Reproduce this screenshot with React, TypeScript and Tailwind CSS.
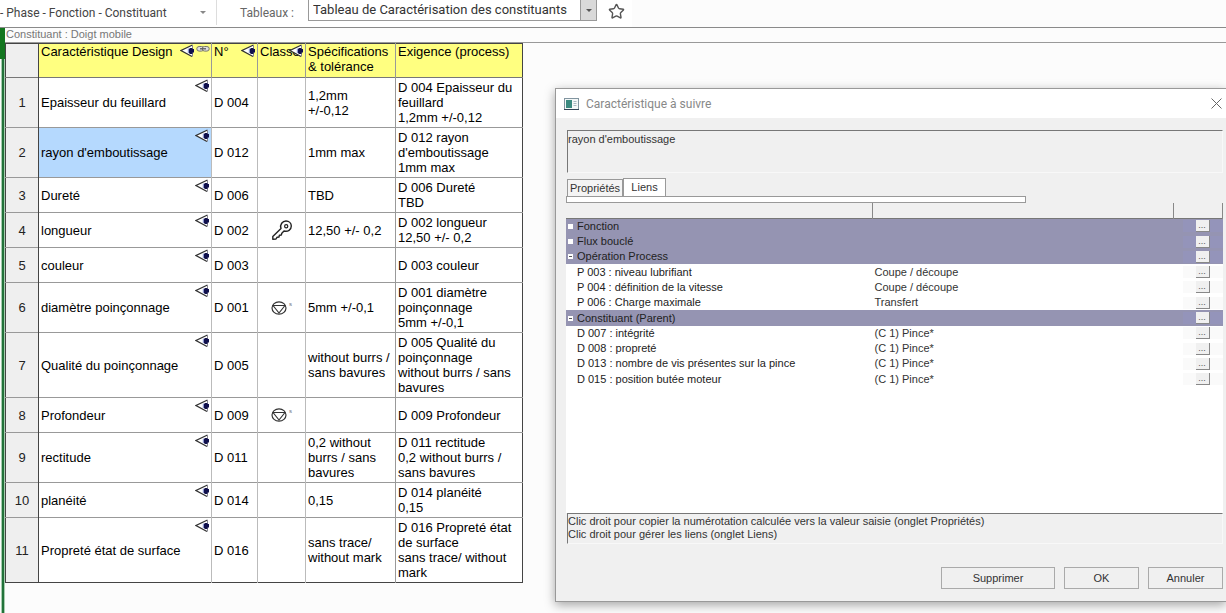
import { Star } from 'lucide-react';

const rows = [
  { name: 'Epaisseur du feuillard', num: 'D 004', spec: ['1,2mm', '+/-0,12'], req: ['D 004 Epaisseur du', 'feuillard', '1,2mm +/-0,12'] },
  { name: "rayon d'emboutissage", num: 'D 012', spec: ['1mm max'], req: ['D 012 rayon', "d'emboutissage", '1mm max'], selected: true },
  { name: 'Dureté', num: 'D 006', spec: ['TBD'], req: ['D 006 Dureté', 'TBD'] },
  { name: 'longueur', num: 'D 002', mark: 'key', spec: ['12,50 +/- 0,2'], req: ['D 002 longueur', '12,50 +/- 0,2'] },
  { name: 'couleur', num: 'D 003', spec: [], req: ['D 003 couleur'] },
  { name: 'diamètre poinçonnage', num: 'D 001', mark: 'safety', spec: ['5mm +/-0,1'], req: ['D 001 diamètre', 'poinçonnage', '5mm +/-0,1'] },
  { name: 'Qualité du poinçonnage', num: 'D 005', spec: ['without burrs /', 'sans bavures'], req: ['D 005 Qualité du', 'poinçonnage', 'without burrs / sans', 'bavures'] },
  { name: 'Profondeur', num: 'D 009', mark: 'safety', spec: [], req: ['D 009 Profondeur'] },
  { name: 'rectitude', num: 'D 011', spec: ['0,2 without', 'burrs / sans', 'bavures'], req: ['D 011 rectitude', '0,2 without burrs /', 'sans bavures'] },
  { name: 'planéité', num: 'D 014', spec: ['0,15'], req: ['D 014 planéité', '0,15'] },
  { name: 'Propreté état de surface', num: 'D 016', spec: ['sans trace/', 'without mark'], req: ['D 016 Propreté état', 'de surface', 'sans trace/ without', 'mark'] },
];

const links = [
  { label: 'Fonction', group: true },
  { label: 'Flux bouclé', group: true },
  { label: 'Opération Process', group: true, open: true },
  { label: 'P 003 : niveau lubrifiant', value: 'Coupe / découpe' },
  { label: 'P 004 : définition de la vitesse', value: 'Coupe / découpe' },
  { label: 'P 006 : Charge maximale', value: 'Transfert' },
  { label: 'Constituant (Parent)', group: true, open: true },
  { label: 'D 007 : intégrité', value: '(C 1) Pince*' },
  { label: 'D 008 : propreté', value: '(C 1) Pince*' },
  { label: 'D 013 : nombre de vis présentes sur la pince', value: '(C 1) Pince*' },
  { label: 'D 015 : position butée moteur', value: '(C 1) Pince*' },
];

function Eye({ className = '' }: { className?: string }) {
  return (
    <svg viewBox="0 0 14 14" className={`h-[14px] w-[14px] ${className}`} fill="none">
      <path d="M12.5 1 L1 6.5 L12 12.5 Z" fill="#fff" />
      <path d="M12.5 1 L1 6.5 L12 12.5" stroke="#333" strokeWidth="1.3" />
      <path d="M12.5 1 V12.5" stroke="#8a8a94" strokeWidth="1" />
      <path d="M10 4 H12.5 V5 H14 V8.5 H12.5 V10 H10 L8.5 8.5 V5.5Z" fill="#10104c" />
      <path d="M8.3 4.5 V9" stroke="#8c9cd8" strokeWidth="1" />
    </svg>
  );
}

function Chain({ className = '' }: { className?: string }) {
  return (
    <svg viewBox="0 0 14 8" className={`h-2 w-[14px] ${className}`} fill="none" stroke="#77776a">
      <rect x="0.8" y="1.5" width="7" height="4.6" rx="2.3" fill="#ddd" />
      <rect x="6.2" y="1.5" width="7" height="4.6" rx="2.3" fill="#ddd" />
      <path d="M4 3.8h6" stroke="#555" strokeWidth="1.2" />
    </svg>
  );
}

function Key() {
  return (
    <svg viewBox="0 0 20 20" className="h-5 w-5" fill="none" stroke="#222" strokeWidth="1.4" strokeLinejoin="round">
      <path d="M9 8.5 C7.6 4.5 10.5 1 14 1 C17 1 19.3 3.2 19.3 6 C19.3 9.8 15.8 12 12 11 L9.8 13.2 L9.3 15 L7.4 15.2 L7 17 L5 17.3 L4 19 L0.8 19.2 L0.8 16.5Z" />
      <circle cx="14.2" cy="6.2" r="1.6" strokeWidth="1.2" />
    </svg>
  );
}

function Safety() {
  return (
    <div className="flex items-start">
      <svg viewBox="0 0 16 14" className="h-[14px] w-4" fill="none" stroke="#333" strokeWidth="1.2">
        <ellipse cx="8" cy="7" rx="7" ry="6.2" />
        <path d="M2 4.5 H14 L8 12Z" strokeLinejoin="round" />
      </svg>
      <span className="ml-[2px] text-[6px] leading-[6px] text-gray-500">s</span>
    </div>
  );
}

function Arrow() {
  return <span className="h-0 w-0 border-x-[3px] border-t-[3px] border-x-transparent border-t-[#555]" />;
}

function Toolbar() {
  return (
    <header className="flex h-[28px] items-start border-b border-[#8a8a8a] font-[Roboto,'Noto_Sans',sans-serif] text-[12px] text-[#444]">
      <div className="flex h-[27px] items-start bg-white">
        <div className="relative flex w-[217px] items-center border-r border-[#ddd]">
          <select aria-label="Vue" className="h-[25px] w-full appearance-none bg-transparent">
            <option>- Phase - Fonction - Constituant</option>
          </select>
          <span className="pointer-events-none absolute right-[10px] top-[11px] flex opacity-70"><Arrow /></span>
        </div>
        <label htmlFor="tableau" className="flex h-[25px] w-[91px] items-center pl-[23px] text-[#666]">Tableaux :</label>
        <div className="relative w-[289px]">
          <select id="tableau" className="h-[21px] w-full appearance-none border border-t-0 border-[#999] bg-white pl-1 text-[13px] text-[#333]">
            <option>Tableau de Caractérisation des constituants</option>
          </select>
          <span className="pointer-events-none absolute right-px top-0 flex h-5 w-4 items-center justify-center border-l border-[#999] bg-[#d9d9d9]"><Arrow /></span>
        </div>
        <button type="button" aria-label="Favori" className="flex h-[23px] w-[35px] items-center pl-[11px]">
          <Star size={17} strokeWidth={2} className="shrink-0 text-[#555]" />
        </button>
      </div>
    </header>
  );
}

function MainTable() {
  return (
    <table className="w-[518px] table-fixed border-collapse border border-[#444] bg-white text-left text-[13px] leading-[15px] text-black">
      <colgroup>
        <col className="w-[33px]" />
        <col className="w-[173px]" />
        <col className="w-[46px]" />
        <col className="w-[48px]" />
        <col className="w-[90px]" />
        <col className="w-[127px]" />
      </colgroup>
      <thead>
        <tr className="h-[34px] border-b border-[#777] bg-[#ffff80] align-top *:font-normal">
          <td className="border-r border-[#444] bg-[#efefef]" />
          <th className="relative border-r border-[#999] pl-[2px]">
            Caractéristique Design
            <Eye className="absolute right-[17px] top-0" />
            <Chain className="absolute right-[1px] top-[1px]" />
          </th>
          <th className="relative border-r border-[#999] pl-[2px]">
            N°
            <Eye className="absolute right-[2px] top-0" />
          </th>
          <th className="relative border-r border-[#999] pl-[2px]">
            Classe
            <Eye className="absolute right-[2px] top-0" />
          </th>
          <th className="border-r border-[#999] pl-[2px]">Spécifications<br />&amp; tolérance</th>
          <th className="pl-[2px]">Exigence (process)</th>
        </tr>
      </thead>
      <tbody>
        {rows.map((r, i) => (
          <tr key={r.num} className="h-[35px] border-b border-[#999] last:border-[#444]">
            <th className="border-r border-[#444] bg-[#efefef] text-center font-normal text-[#222]">{i + 1}</th>
            <td className={`relative border-r border-[#bbb] pl-[2px] ${r.selected ? 'bg-[#b5d9fe]' : ''}`}>
              {r.name}
              <Eye className="absolute right-[2px] top-[1px]" />
            </td>
            <td className="border-r border-[#bbb] pl-[2px]">{r.num}</td>
            <td className="border-r border-[#bbb]">
              <div className="flex justify-center">
                {r.mark === 'key' && <Key />}
                {r.mark === 'safety' && <Safety />}
              </div>
            </td>
            <td className="whitespace-nowrap border-r border-[#999] py-[2px] pl-[2px]">
              {r.spec.map(line => <div key={line}>{line}</div>)}
            </td>
            <td className="whitespace-nowrap py-[2px] pl-[2px]">
              {r.req.map(line => <div key={line}>{line}</div>)}
            </td>
          </tr>
        ))}
      </tbody>
    </table>
  );
}

function LinksTable() {
  return (
    <table className="h-[184px] w-full table-fixed border-collapse text-left leading-[13px]">
      <colgroup>
        <col />
        <col className="w-[301px]" />
        <col className="w-[49px]" />
      </colgroup>
      <thead>
        <tr className="h-[15px] border-b border-[#777]">
          <td className="border-r border-[#888]" />
          <td className="border-r border-[#888]" />
          <td className="border-r border-[#888]" />
        </tr>
      </thead>
      <tbody>
        {links.map(l => (
          <tr key={l.label} className={l.group ? 'bg-[#9594b2]' : 'bg-white'}>
            <td>
              <div className="flex items-center text-[#222]">
                {l.group ? (
                  <button type="button" aria-label={l.label} className="mx-[2px] flex h-[5px] w-[5px] items-center justify-center bg-white">
                    {l.open && <span className="h-px w-[3px] bg-[#555]" />}
                  </button>
                ) : (
                  <span className="w-[9px]" />
                )}
                <span className="pl-[2px]">{l.label}</span>
              </div>
            </td>
            <td className="pl-[2px]">{l.value}</td>
            <td>
              <div className={`ml-[9px] flex pl-[13px] ${l.group ? 'bg-[#9494ba]' : 'bg-[#fafafa]'}`}>
                <button
                  type="button"
                  aria-label={`Modifier ${l.label}`}
                  className="h-3 w-[14px] border-b border-r border-[#888] bg-[#f0f0f0] text-[9px] leading-[9px] text-[#555]"
                >
                  ...
                </button>
              </div>
            </td>
          </tr>
        ))}
      </tbody>
    </table>
  );
}

function LinkDialog() {
  return (
    <div
      role="dialog"
      aria-labelledby="dialog-title"
      className="absolute left-[555px] right-0 top-[88px] border border-r-0 border-[#999] bg-[#f0f0f0] text-[11px] text-[#333] shadow-[0_3px_10px_rgba(0,0,0,0.35)]"
    >
      <div className="flex h-[29px] items-center bg-white pl-2 pr-1">
        <svg viewBox="0 0 15 12" className="h-3 w-[15px]">
          <rect x="0.5" y="0.5" width="14" height="11" fill="#f4f8f8" stroke="#8295a0" />
          <rect x="2" y="2" width="6" height="8" fill="#3b8a80" />
          <path d="M9.5 3.5h3M9.5 5.5h3M9.5 7.5h3" stroke="#a8b8c0" />
          <path d="M0 11.5h15" stroke="#345" />
        </svg>
        <h2 id="dialog-title" className="ml-[7px] font-[Roboto,'Noto_Sans',sans-serif] text-[12px] text-[#888]">Caractéristique à suivre</h2>
        <button type="button" aria-label="Fermer" className="ml-auto">
          <svg viewBox="0 0 11 11" className="h-[11px] w-[11px]" stroke="#666" strokeWidth="1">
            <path d="M0.5 0.5l10 10M10.5 0.5l-10 10" />
          </svg>
        </button>
      </div>
      <div className="flex flex-col pb-3 pl-[10px] pr-[3px] pt-3">
        <textarea
          readOnly
          aria-label="Nom"
          defaultValue="rayon d'emboutissage"
          className="ml-px block h-[43px] resize-none border border-b-[#f8f8f8] border-l-[#777] border-r-[#f8f8f8] border-t-[#777] pt-[2px] leading-[13px]"
        />
        <div role="tablist" className="ml-px mt-[5px] flex items-end">
          <button type="button" role="tab" aria-selected="false" className="h-[17px] w-[56px] border border-b-0 border-[#999] bg-[#f4f4f4]">Propriétés</button>
          <button type="button" role="tab" aria-selected="true" className="h-[18px] w-[43px] border border-b-0 border-[#999] bg-white">Liens</button>
        </div>
        <div className="h-[7px] w-[460px] border border-[#999] bg-white" />
        <div className="h-[310px] bg-gradient-to-b from-[#f0f0f0] from-[16px] to-white to-[16px]">
          <LinksTable />
        </div>
        <div className="ml-px h-[31px] border border-b-[#f8f8f8] border-l-[#777] border-r-[#f8f8f8] border-t-[#777] pt-px leading-[13px]">
          <p>Clic droit pour copier la numérotation calculée vers la valeur saisie (onglet Propriétés)</p>
          <p>Clic droit pour gérer les liens (onglet Liens)</p>
        </div>
        <div className="mt-[23px] flex justify-end gap-[9px]">
          <button type="button" className="h-[22px] w-[114px] border border-[#aaa]">Supprimer</button>
          <button type="button" className="h-[22px] w-[75px] border border-[#aaa]">OK</button>
          <button type="button" className="h-[22px] w-[75px] border border-[#aaa]">Annuler</button>
        </div>
      </div>
    </div>
  );
}

export default function App() {
  return (
    <div className="relative flex min-h-screen flex-col overflow-hidden bg-[#fcfcfc] font-['Liberation_Sans',Arial,sans-serif]">
      <Toolbar />
      <main className="flex flex-1">
        <div className="flex w-[5px] flex-col">
          <div className="h-[31px] bg-[#13761f]" />
          <div className="ml-px flex-1 border-x border-[#a8cdb0] bg-[#22733a]" />
        </div>
        <div className="min-w-0 flex-1">
          <p className="h-[15px] border-b border-[#999] pl-px text-[11px] leading-[13px] text-[#777]">Constituant : Doigt mobile</p>
          <MainTable />
        </div>
      </main>
      <LinkDialog />
    </div>
  );
}
